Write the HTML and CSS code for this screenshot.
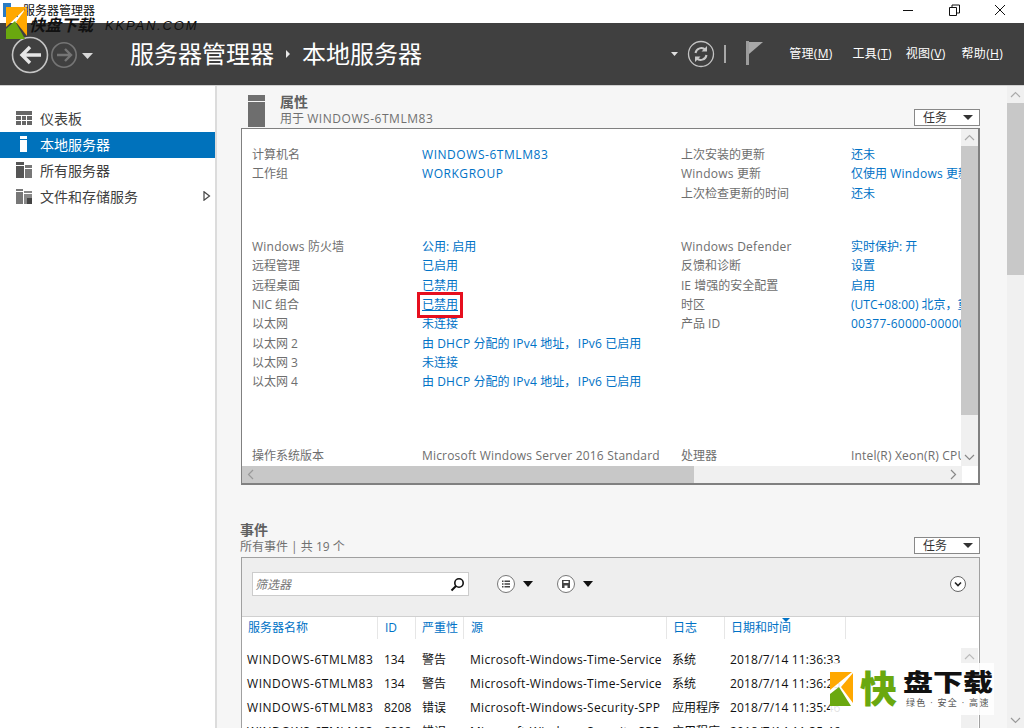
FILE: index.html
```html
<!DOCTYPE html>
<html lang="zh-CN">
<head>
<meta charset="utf-8">
<title>服务器管理器</title>
<link rel="stylesheet" href="styles.css">
</head>
<body>
<div class="app">
  <div class="titlebar">
    <svg class="app-icon" width="16" height="16" viewBox="0 0 16 16"><rect x="0" y="1" width="8" height="14" fill="#2b7cc4"/><rect x="9" y="6" width="6" height="9" fill="#2b7cc4"/></svg>
    <span class="title-text">服务器管理器</span>
    <div class="winctl">
      <svg width="46" height="20" viewBox="0 0 46 20"><path d="M18 10.5h10" stroke="#111" fill="none"/></svg>
      <svg width="46" height="20" viewBox="0 0 46 20"><path d="M18.5 7.5h7v8h-7zM21 7.5v-2.5h7.5v8h-3" stroke="#111" fill="none"/></svg>
      <svg width="46" height="20" viewBox="0 0 46 20"><path d="M18 5l10 10M28 5l-10 10" stroke="#111" fill="none"/></svg>
    </div>
  </div>
  <header class="head">
    <svg class="nav" width="86" height="44" viewBox="0 0 86 44">
      <circle cx="19" cy="22" r="17.500" fill="none" stroke="#c4c4c4" stroke-width="1.600"/>
      <path d="M30 22H11M19 14l-8 8 8 8" fill="none" stroke="#e6e6e6" stroke-width="3.400"/>
      <circle cx="53" cy="22" r="12.200" fill="none" stroke="#757575" stroke-width="1.600"/>
      <path d="M46 22h13M54 16l6 6-6 6" fill="none" stroke="#757575" stroke-width="2.400"/>
      <path d="M71 20h11l-5.500 6z" fill="#d8d8d8"/>
    </svg>
    <div class="crumb">
      <span>服务器管理器</span>
      <svg width="28" height="10" viewBox="0 0 28 10"><path d="M12 1l4 4-4 4z" fill="#e8e8e8"/></svg>
      <span>本地服务器</span>
    </div>
    <div class="head-right">
      <svg width="10" height="10" viewBox="0 0 10 10"><path d="M1 3h7l-3.500 4z" fill="#e0e0e0"/></svg>
      <svg class="refresh" width="28" height="28" viewBox="0 0 28 28">
        <circle cx="14" cy="14" r="12.500" fill="none" stroke="#c4c4c4" stroke-width="1.300"/>
        <path d="M8.500 13a5.800 5.800 0 0 1 10-3M19.500 15a5.800 5.800 0 0 1-10 3" fill="none" stroke="#c8c8c8" stroke-width="2"/>
        <path d="M20 6v5.500h-5.500zM8 22v-5.500h5.500z" fill="#c8c8c8"/>
      </svg>
      <span class="head-sep"></span>
      <svg class="flag" width="17" height="24" viewBox="0 0 17 24"><rect x="0" y="0" width="3" height="24" fill="#9c9c9c"/><path d="M3 1h14L3 13z" fill="#a8a8a8"/></svg>
      <nav class="menu">
        <span class="m1">管理(<u>M</u>)</span>
        <span class="m2">工具(<u>T</u>)</span>
        <span class="m3">视图(<u>V</u>)</span>
        <span>帮助(<u>H</u>)</span>
      </nav>
    </div>
  </header>
  <div class="main">
    <aside class="side">
      <div class="side-item">
        <svg width="16" height="14" viewBox="0 0 16 14"><path d="M0 0h16v4H0zM0 5h5v4H0zM6 5h4v4H6zM11 5h5v4h-5zM0 10h5v4H0zM6 10h4v4H6zM11 10h5v4h-5z" fill="#666"/></svg>
        <span>仪表板</span>
      </div>
      <div class="side-item on">
        <svg width="16" height="16" viewBox="0 0 16 16"><path d="M4 0h7v3H4zM4 4h7v12H4z" fill="#fff"/></svg>
        <span>本地服务器</span>
      </div>
      <div class="side-item">
        <svg width="16" height="16" viewBox="0 0 16 16"><path d="M0 0h8v3H0zM0 4h8v12H0z" fill="#555"/><path d="M9 3h7v3H9zM9 7h7v9H9z" fill="#777"/></svg>
        <span>所有服务器</span>
      </div>
      <div class="side-item">
        <svg width="16" height="15" viewBox="0 0 16 15"><path d="M0 0h7v2H0zM0 3h7v12H0z" fill="#777"/><path d="M8 2h8v2H8zM8 5h8v10H8z" fill="#888"/><path d="M11 9h5v6h-5z" fill="#444"/></svg>
        <span>文件和存储服务</span>
        <svg class="side-arrow" width="8" height="10" viewBox="0 0 8 10"><path d="M1 .8l5.500 4.200L1 9.200z" fill="none" stroke="#444" stroke-width="1.200"/></svg>
      </div>
    </aside>
    <div class="content">
      <section class="props-sec">
        <div class="sec-head">
          <svg class="sec-icon" width="17" height="32" viewBox="0 0 17 32"><rect width="17" height="6" fill="#707070"/><rect y="7" width="17" height="25" fill="#6e6e6e"/></svg>
          <div class="sec-title">
            <b>属性</b>
            <span>用于 <span class="n">WINDOWS-6TMLM83</span></span>
          </div>
          <div class="task">任务<i class="tri"></i></div>
        </div>
        <div class="panel">
          <div class="panel-top">
            <div class="props">
              <div class="group g1">
                <span class="k">计算机名</span><a class="n">WINDOWS-6TMLM83</a><span class="k">上次安装的更新</span><a>还未</a>
                <span class="k">工作组</span><a class="n">WORKGROUP</a><span class="k"><span class="l">Windows</span> 更新</span><a>仅使用 <span class="l">Windows</span> 更新</a>
                <span></span><span></span><span class="k">上次检查更新的时间</span><a>还未</a>
              </div>
              <div class="group g2">
                <span class="k"><span class="l">Windows</span> 防火墙</span><a>公用: 启用</a><span class="k l">Windows Defender</span><a>实时保护: 开</a>
                <span class="k">远程管理</span><a>已启用</a><span class="k">反馈和诊断</span><a>设置</a>
                <span class="k">远程桌面</span><a>已禁用</a><span class="k">IE 增强的安全配置</span><a>启用</a>
                <span class="k">NIC 组合</span><a class="hot"><u>已禁用</u></a><span class="k">时区</span><a>(UTC+08:00) 北京，重庆</a>
                <span class="k">以太网</span><a>未连接</a><span class="k">产品 ID</span><a class="l">00377-60000-00000-AA</a>
                <span class="k">以太网 2</span><a>由 <span class="l">DHCP</span> 分配的 <span class="l">IPv4</span> 地址<span class="comma">，</span><span class="l">IPv6</span> 已启用</a><span></span><span></span>
                <span class="k">以太网 3</span><a>未连接</a><span></span><span></span>
                <span class="k">以太网 4</span><a>由 <span class="l">DHCP</span> 分配的 <span class="l">IPv4</span> 地址<span class="comma">，</span><span class="l">IPv6</span> 已启用</a><span></span><span></span>
              </div>
              <div class="group g3">
                <span class="k">操作系统版本</span><span class="k d">Microsoft Windows Server 2016 Standard</span><span class="k">处理器</span><span class="k d">Intel(R) Xeon(R) CPU E5</span>
              </div>
            </div>
            <div class="vbar">
              <div class="btn"><svg width="11" height="7" viewBox="0 0 11 7"><path d="M1 6l4.500-4.500L10 6" fill="none" stroke="#aaa" stroke-width="1.200"/></svg></div>
              <div class="vthumb"></div>
              <div class="vrest"><svg width="11" height="7" viewBox="0 0 11 7"><path d="M1 1l4.500 4.500L10 1" fill="none" stroke="#888" stroke-width="1.200"/></svg></div>
            </div>
          </div>
          <div class="hbar">
            <div class="hbtn"><svg width="7" height="11" viewBox="0 0 7 11"><path d="M6 1L1.500 5.500 6 10" fill="none" stroke="#999" stroke-width="1.200"/></svg></div>
            <div class="hthumb"></div>
            <div class="hrest"><svg width="7" height="11" viewBox="0 0 7 11"><path d="M1 1l4.500 4.500L1 10" fill="none" stroke="#888" stroke-width="1.200"/></svg></div>
          </div>
        </div>
      </section>
      <section class="events-sec">
        <div class="ev-head">
          <div class="sec-title">
            <b>事件</b>
            <span>所有事件 | 共 19 个</span>
          </div>
          <div class="task">任务<i class="tri"></i></div>
        </div>
        <div class="ev-panel">
          <div class="toolbar">
            <div class="filter">
              <em>筛选器</em>
              <svg width="15" height="15" viewBox="0 0 15 15"><circle cx="9" cy="6" r="4.200" fill="none" stroke="#111" stroke-width="1.600"/><path d="M6 9l-4.500 4.500" stroke="#111" stroke-width="2"/></svg>
            </div>
            <div class="tool t-a">
              <svg width="18" height="18" viewBox="0 0 18 18"><circle cx="9" cy="9" r="8.500" fill="#fff" stroke="#777"/><path d="M5 5.500h1.500v1.500H5zM5 8.300h1.500v1.500H5zM5 11h1.500v1.500H5zM7.500 5.500H13v1.500H7.500zM7.500 8.300H13v1.500H7.500zM7.500 11H13v1.500H7.500z" fill="#444"/></svg>
              <i class="tri big"></i>
            </div>
            <div class="tool t-b">
              <svg width="18" height="18" viewBox="0 0 18 18"><circle cx="9" cy="9" r="8.500" fill="#fff" stroke="#777"/><path d="M5 5h8v8H5z" fill="#444"/><path d="M6.500 6h5v2h-5zM7.500 10.500h3V13h-3z" fill="#fff"/></svg>
              <i class="tri big"></i>
            </div>
            <svg class="expand" width="16" height="16" viewBox="0 0 16 16"><circle cx="8" cy="8" r="7.500" fill="#fff" stroke="#666"/><path d="M5 6.500l3 3 3-3" fill="none" stroke="#222" stroke-width="1.600"/></svg>
          </div>
          <div class="grid">
            <div class="cols">
              <span class="c1">服务器名称</span>
              <span class="c2">ID</span>
              <span class="c3">严重性</span>
              <span class="c4">源</span>
              <span class="c5">日志</span>
              <span class="c6">日期和时间<i class="sort"></i></span>
              <span class="c7"></span>
            </div>
            <div class="rows-wrap">
              <div class="rows">
                <div class="row"><span class="n">WINDOWS-6TMLM83</span><span>134</span><span>警告</span><span class="s">Microsoft-Windows-Time-Service</span><span>系统</span><span class="d">2018/7/14 11:36:33</span></div>
                <div class="row"><span class="n">WINDOWS-6TMLM83</span><span>134</span><span>警告</span><span class="s">Microsoft-Windows-Time-Service</span><span>系统</span><span class="d">2018/7/14 11:36:25</span></div>
                <div class="row"><span class="n">WINDOWS-6TMLM83</span><span>8208</span><span>错误</span><span class="s">Microsoft-Windows-Security-SPP</span><span>应用程序</span><span class="d">2018/7/14 11:35:46</span></div>
                <div class="row"><span class="n">WINDOWS-6TMLM83</span><span>8208</span><span>错误</span><span class="s">Microsoft-Windows-Security-SPP</span><span>应用程序</span><span class="d">2018/7/14 11:35:46</span></div>
              </div>
              <div class="ev-vbar">
                <div class="btn"><svg width="11" height="7" viewBox="0 0 11 7"><path d="M1 6l4.500-4.500L10 6" fill="none" stroke="#bbb" stroke-width="1.200"/></svg></div>
              </div>
            </div>
          </div>
        </div>
      </section>
    </div>
    <div class="outer-bar">
      <div class="btn"><svg width="11" height="7" viewBox="0 0 11 7"><path d="M1 6l4.500-4.500L10 6" fill="none" stroke="#aaa" stroke-width="1.200"/></svg></div>
      <div class="othumb"></div>
      <div class="orest"><svg width="11" height="7" viewBox="0 0 11 7"><path d="M1 1l4.500 4.500L10 1" fill="none" stroke="#999" stroke-width="1.200"/></svg></div>
    </div>
  </div>
</div>
<div class="wm-top">
  <svg width="24" height="32" viewBox="0 0 24 32"><path d="M0 0h21L0 20z" fill="#ffa800"/><path d="M21 0v29L10 15z" fill="#ffa800"/><path d="M0 32V22l9-8 10 18z" fill="#6aa80f"/></svg>
  <span class="wm-cn">快盘下载</span>
  <span class="wm-en">KKPAN.COM</span>
</div>
<div class="wm-bottom">
  <svg width="24" height="34" viewBox="0 0 24 34"><path d="M0 0h22L0 18z" fill="#ffa800"/><path d="M23 1v30L11 15z" fill="#ffa800"/><path d="M0 34V22l9-7 12 19z" fill="#6aa80f"/></svg>
  <span class="wb-k">快</span>
  <div class="wb-t">
    <b>盘下载</b>
    <small>绿色 · 安全 · 高速</small>
  </div>
</div>
</body>
</html>
```
FILE: styles.css
```css
* { box-sizing: border-box; }
html, body { margin: 0; padding: 0; height: 728px; overflow: hidden; }
body {
  position: relative;
  font-family: "Open Sans", "Noto Sans CJK SC", sans-serif;
  font-size: 12px;
  color: #111;
  background: #fff;
}
.app { display: flex; flex-direction: column; height: 728px; }
.n { letter-spacing: .55px; }
.s { letter-spacing: .3px; }
.d { letter-spacing: .18px; }
.l { letter-spacing: .25px; }
.comma { letter-spacing: 1.500px; }

.titlebar { height: 23px; display: flex; align-items: center; background: #fff; padding-left: 3px; }
.app-icon { margin-right: 4px; margin-top: -4px; }
.title-text { font-size: 12px; line-height: 16px; margin-top: -1px; }
.winctl { margin-left: auto; display: flex; margin-right: 1px; margin-top: -3px; }
.winctl svg { display: block; }

.head { height: 62px; background: #404040; display: flex; align-items: center; padding-left: 11px; color: #fff; flex: none; }
.nav { display: block; margin-top: 1px; }
.crumb { display: flex; align-items: center; margin-left: 33px; font-size: 24px; line-height: 34px; }
.head-right { margin-left: auto; display: flex; align-items: center; }
.head-right > svg:first-child { margin-right: 7px; }
.refresh { display: block; }
.head-sep { width: 2px; height: 18px; background: #a8a8a8; margin: 0 20px 0 9px; }
.flag { margin-top: -3px; }
.menu { display: flex; margin-left: 26px; margin-right: 21px; font-size: 12px; line-height: 16px; color: #fff; letter-spacing: .3px; }
.menu .m1 { margin-right: 20px; }
.menu .m2 { margin-right: 14px; }
.menu .m3 { margin-right: 16px; }

.main { flex: 1; display: flex; min-height: 0; border-top: 1px solid #d0d0d0; }
.side { width: 217px; flex: none; background: #fff; border-right: 2px solid #dcdcdc; padding-top: 20px; font-size: 14px; }
.side-item { height: 26px; display: flex; align-items: center; padding: 0 0 2px 16px; color: #404040; }
.side-item > svg:first-child { width: 16px; margin-right: 8px; flex: none; }
.side-item.on { background: #0072bc; color: #fff; width: 215px; }
.side-arrow { margin-left: auto; margin-right: 4px; }

.content { flex: 1; min-width: 0; background: #f6f6f6; padding: 9px 27px 0 23px; }
.props-sec { margin-left: 1px; }
.sec-head { display: flex; height: 33px; padding-left: 7px; }
.sec-icon { flex: none; display: block; }
.sec-title { display: flex; flex-direction: column; color: #707070; line-height: 16px; }
.sec-head .sec-title { margin: -1px 0 0 15px; }
.sec-head .sec-title span { margin-top: 1px; }
.sec-head .sec-title span span { margin-top: 0; }
.sec-title b { font-size: 14px; font-weight: 700; color: #606060; }
.task {
  margin-left: auto; width: 66px; height: 17px; margin-top: 14px; background: #fff; border: 1px solid #888;
  display: flex; align-items: center; justify-content: space-between; padding: 0 6px 0 8px; color: #333; line-height: 15px;
}
.tri { display: block; width: 0; height: 0; border-style: solid; border-width: 5px 5px 0; border-color: #333 transparent transparent; }
.tri.big { border-width: 6px 5px 0; border-color: #111 transparent transparent; }

.panel { height: 357px; background: #fff; border: 2px solid #808080; border-top-width: 1px; border-left-width: 1px; display: flex; flex-direction: column; }
.panel-top { flex: 1; display: flex; min-height: 0; }
.props { flex: 1; min-width: 0; overflow: hidden; padding: 16px 0 0 10px; }
.group { display: grid; grid-template-columns: 170px 259px 170px 300px; grid-auto-rows: 19.330px; white-space: nowrap; line-height: 19px; width: 899px; }
.g2 { margin-top: 34px; }
.g3 { margin-top: 54px; }
.k { color: #6e6e6e; }
.props a { color: #0072c6; }
.hot { position: relative; }
.hot::after { content: ""; box-sizing: border-box; position: absolute; left: -5px; top: -3px; width: 46px; height: 26px; border: 3px solid #e60f1e; pointer-events: none; }

.vbar { width: 17px; flex: none; display: flex; flex-direction: column; background: #f0f0f0; }
.btn { height: 17px; display: flex; align-items: center; justify-content: center; flex: none; }
.vthumb { height: 269px; background: #c8c8c8; flex: none; }
.vrest { flex: 1; display: flex; align-items: flex-end; justify-content: center; padding-bottom: 5px; }
.hbar { height: 17px; flex: none; display: flex; background: #f0f0f0; width: 720px; }
.hbtn { width: 17px; background: #c8c8c8; display: flex; align-items: center; justify-content: center; flex: none; }
.hthumb { width: 435px; background: #c8c8c8; flex: none; }
.hrest { flex: 1; display: flex; align-items: center; justify-content: flex-end; padding-right: 5px; }

.events-sec { margin-top: 36px; }
.ev-head { display: flex; height: 36px; }
.ev-head .sec-title { margin-top: 1px; }
.ev-head .sec-title span { margin-top: 1px; }
.ev-head .task { margin-top: 16px; }
.ev-panel { margin-left: 1px; border: 1px solid #a0a0a0; background: #fff; height: 200px; border-bottom: 0; }
.toolbar { height: 59px; background: #eee; border-bottom: 1px solid #d0d0d0; display: flex; align-items: center; padding: 0 13px 6px 10px; }
.filter { width: 217px; height: 24px; background: #fff; border: 1px solid #ccc; display: flex; align-items: center; justify-content: space-between; padding: 0 3px 0 2px; color: #777; }
.filter em { font-style: italic; }
.tool { display: flex; align-items: center; gap: 8px; }
.t-a { margin-left: 28px; }
.t-b { margin-left: 24px; }
.expand { margin-left: auto; }

.cols { display: grid; grid-template-columns: 136px 38px 48px 203px 58px 121px 1fr; height: 28px; color: #0072c6; }
.cols span { padding-left: 6px; border-right: 1px solid #e6e6e6; line-height: 21px; position: relative; height: 22px; }
.cols .c2, .cols .c4 { padding-left: 7px; }
.cols .c7 { border: 0; }
.sort { position: absolute; left: 57px; top: 1px; width: 0; height: 0; border-style: solid; border-width: 4px 4px 0; border-color: #0072c6 transparent transparent; }
.rows-wrap { display: flex; }
.rows { flex: 1; min-width: 0; padding-top: 3px; padding-left: 5px; }
.row { display: grid; grid-template-columns: 137px 38px 48px 202px 58px 121px; height: 24px; line-height: 24px; white-space: nowrap; color: #111; }
.ev-vbar { width: 17px; flex: none; margin-top: 3px; margin-right: 1px; background: #f0f0f0; }

.outer-bar { width: 17px; flex: none; background: #f0f0f0; display: flex; flex-direction: column; }
.othumb { height: 172px; background: #c8c8c8; flex: none; }
.orest { flex: 1; display: flex; align-items: flex-end; justify-content: center; padding-bottom: 4px; }

.wm-top { position: absolute; left: 6px; top: 7px; display: flex; align-items: center; }
.wm-cn { font-size: 16px; font-style: italic; font-weight: 700; margin-left: -1px; margin-top: 2px; color: #111; }
.wm-en { font-family: "Liberation Sans", sans-serif; font-size: 13px; font-style: italic; letter-spacing: 1.800px; margin-left: 12px; margin-top: 5px; color: #111; }

.wm-bottom { position: absolute; left: 830px; top: 663px; width: 164px; height: 52px; background: rgba(255,255,255,.88); display: flex; align-items: center; }
.wb-k { font-size: 37px; font-weight: 900; color: #6aa80f; line-height: 38px; margin-left: 6px; margin-right: 6px; }
.wb-t { display: flex; flex-direction: column; line-height: 1; }
.wb-t b { font-size: 30px; font-weight: 900; color: #111; line-height: 26px; transform: scaleY(.8); transform-origin: top; }
.wb-t small { font-size: 9px; color: #555; letter-spacing: 1.300px; margin: 0 0 0 3px; }
```
